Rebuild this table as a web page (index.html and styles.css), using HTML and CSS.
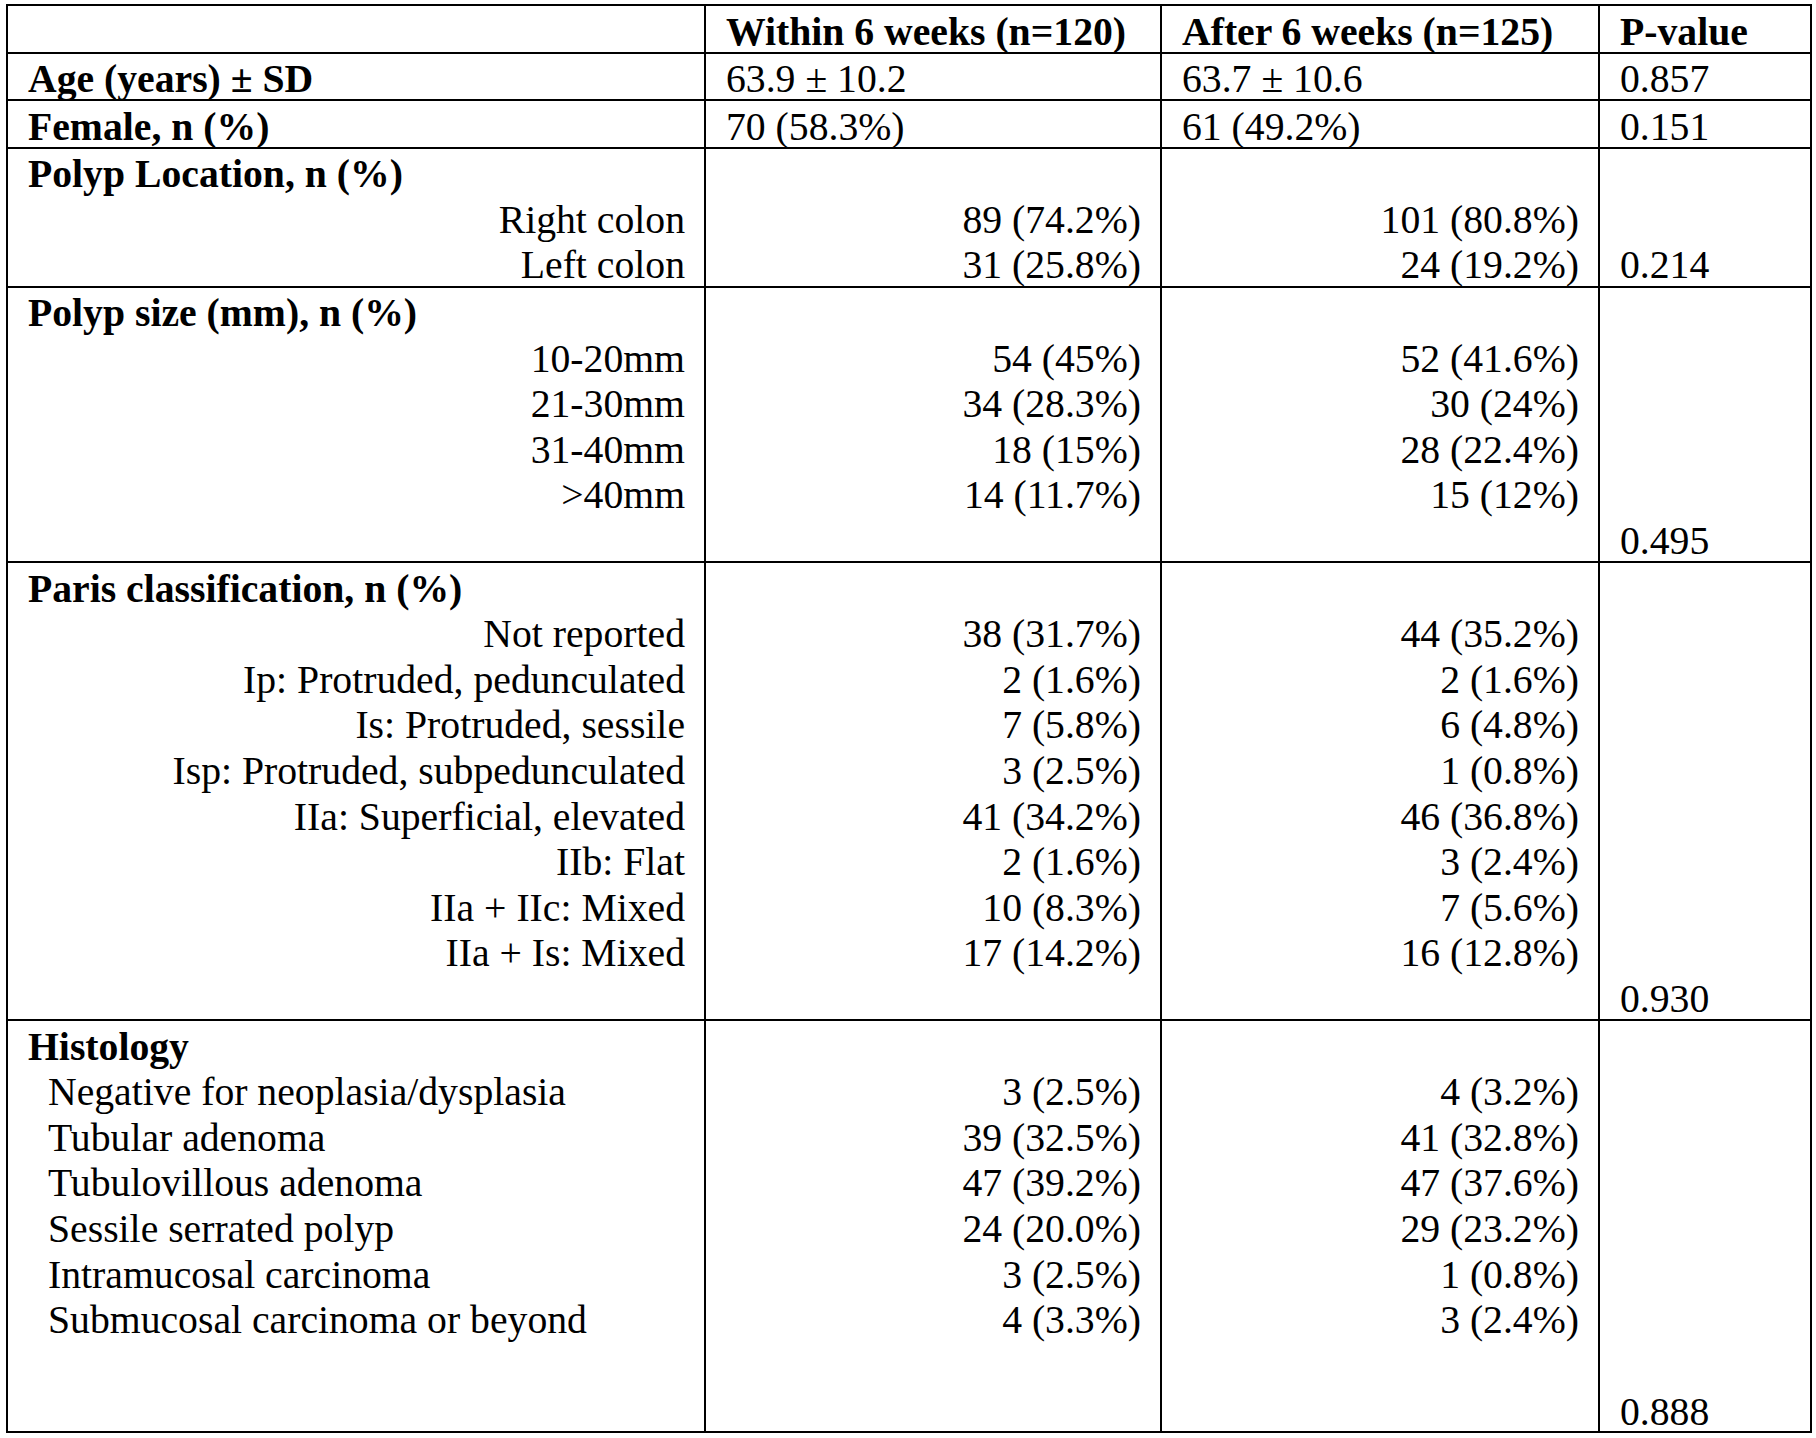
FILE: index.html
```html
<!DOCTYPE html>
<html lang="en">
<head>
<meta charset="utf-8">
<title>Table</title>
<link rel="stylesheet" href="styles.css">
</head>
<body>
<div class="page">
  <div class="tbl">
    <!-- header -->
    <div class="c"><div class="ln">&nbsp;</div></div>
    <div class="c b"><div class="ln">Within 6 weeks (n=120)</div></div>
    <div class="c b"><div class="ln">After 6 weeks (n=125)</div></div>
    <div class="c b last"><div class="ln">P-value</div></div>

    <!-- age -->
    <div class="c b"><div class="ln">Age (years) ± SD</div></div>
    <div class="c"><div class="ln">63.9 ± 10.2</div></div>
    <div class="c"><div class="ln">63.7 ± 10.6</div></div>
    <div class="c last"><div class="ln">0.857</div></div>

    <!-- female -->
    <div class="c b"><div class="ln">Female, n (%)</div></div>
    <div class="c"><div class="ln">70 (58.3%)</div></div>
    <div class="c"><div class="ln">61 (49.2%)</div></div>
    <div class="c last"><div class="ln">0.151</div></div>

    <!-- polyp location -->
    <div class="c">
      <div class="ln b">Polyp Location, n (%)</div>
      <div class="ln r">Right colon</div>
      <div class="ln r">Left colon</div>
    </div>
    <div class="c r">
      <div class="ln">&nbsp;</div>
      <div class="ln">89 (74.2%)</div>
      <div class="ln">31 (25.8%)</div>
    </div>
    <div class="c r">
      <div class="ln">&nbsp;</div>
      <div class="ln">101 (80.8%)</div>
      <div class="ln">24 (19.2%)</div>
    </div>
    <div class="c last p"><div class="ln">0.214</div></div>

    <!-- polyp size -->
    <div class="c">
      <div class="ln b">Polyp size (mm), n (%)</div>
      <div class="ln r">10-20mm</div>
      <div class="ln r">21-30mm</div>
      <div class="ln r">31-40mm</div>
      <div class="ln r">&gt;40mm</div>
      <div class="ln">&nbsp;</div>
    </div>
    <div class="c r">
      <div class="ln">&nbsp;</div>
      <div class="ln">54 (45%)</div>
      <div class="ln">34 (28.3%)</div>
      <div class="ln">18 (15%)</div>
      <div class="ln">14 (11.7%)</div>
    </div>
    <div class="c r">
      <div class="ln">&nbsp;</div>
      <div class="ln">52 (41.6%)</div>
      <div class="ln">30 (24%)</div>
      <div class="ln">28 (22.4%)</div>
      <div class="ln">15 (12%)</div>
    </div>
    <div class="c last p"><div class="ln">0.495</div></div>

    <!-- paris -->
    <div class="c">
      <div class="ln b">Paris classification, n (%)</div>
      <div class="ln r">Not reported</div>
      <div class="ln r">Ip: Protruded, pedunculated</div>
      <div class="ln r">Is: Protruded, sessile</div>
      <div class="ln r">Isp: Protruded, subpedunculated</div>
      <div class="ln r">IIa: Superficial, elevated</div>
      <div class="ln r">IIb: Flat</div>
      <div class="ln r">IIa + IIc: Mixed</div>
      <div class="ln r">IIa + Is: Mixed</div>
      <div class="ln">&nbsp;</div>
    </div>
    <div class="c r">
      <div class="ln">&nbsp;</div>
      <div class="ln">38 (31.7%)</div>
      <div class="ln">2 (1.6%)</div>
      <div class="ln">7 (5.8%)</div>
      <div class="ln">3 (2.5%)</div>
      <div class="ln">41 (34.2%)</div>
      <div class="ln">2 (1.6%)</div>
      <div class="ln">10 (8.3%)</div>
      <div class="ln">17 (14.2%)</div>
    </div>
    <div class="c r">
      <div class="ln">&nbsp;</div>
      <div class="ln">44 (35.2%)</div>
      <div class="ln">2 (1.6%)</div>
      <div class="ln">6 (4.8%)</div>
      <div class="ln">1 (0.8%)</div>
      <div class="ln">46 (36.8%)</div>
      <div class="ln">3 (2.4%)</div>
      <div class="ln">7 (5.6%)</div>
      <div class="ln">16 (12.8%)</div>
    </div>
    <div class="c last p"><div class="ln">0.930</div></div>

    <!-- histology -->
    <div class="c end">
      <div class="ln b">Histology</div>
      <div class="ln ind">Negative for neoplasia/dysplasia</div>
      <div class="ln ind">Tubular adenoma</div>
      <div class="ln ind">Tubulovillous adenoma</div>
      <div class="ln ind">Sessile serrated polyp</div>
      <div class="ln ind">Intramucosal carcinoma</div>
      <div class="ln ind">Submucosal carcinoma or beyond</div>
      <div class="ln">&nbsp;</div>
      <div class="ln">&nbsp;</div>
    </div>
    <div class="c r end">
      <div class="ln">&nbsp;</div>
      <div class="ln">3 (2.5%)</div>
      <div class="ln">39 (32.5%)</div>
      <div class="ln">47 (39.2%)</div>
      <div class="ln">24 (20.0%)</div>
      <div class="ln">3 (2.5%)</div>
      <div class="ln">4 (3.3%)</div>
    </div>
    <div class="c r end">
      <div class="ln">&nbsp;</div>
      <div class="ln">4 (3.2%)</div>
      <div class="ln">41 (32.8%)</div>
      <div class="ln">47 (37.6%)</div>
      <div class="ln">29 (23.2%)</div>
      <div class="ln">1 (0.8%)</div>
      <div class="ln">3 (2.4%)</div>
    </div>
    <div class="c last p end"><div class="ln low">0.888</div></div>
  </div>
</div>
</body>
</html>
```

FILE: styles.css
```css
html, body {
  margin: 0;
  padding: 0;
  background: #ffffff;
}

.page {
  padding: 4px 0 0 6px;
}

.tbl {
  display: grid;
  grid-template-columns: 698px 456px 438px 210px;
  width: 1806px;
  box-sizing: border-box;
  border: 2px solid #000;
  font-family: "Liberation Serif", "Times New Roman", serif;
  font-size: 39.7px;
  color: #000;
}

.c {
  box-sizing: border-box;
  padding: 0 19px 0 20px;
  border-right: 2px solid #000;
  border-bottom: 2px solid #000;
  white-space: nowrap;
}

.ln {
  box-sizing: border-box;
  height: 45.6px;
  padding-top: 6.5px;
  line-height: 39.1px;
}

.ln.low {
  padding-top: 8.5px;
  line-height: 37.1px;
}

.c.last {
  border-right: none;
}

.c.end {
  border-bottom: none;
}

.b {
  font-weight: bold;
}

.r {
  text-align: right;
}

.ind {
  padding-left: 20px;
}

.p {
  display: flex;
  flex-direction: column;
  justify-content: flex-end;
}
```
